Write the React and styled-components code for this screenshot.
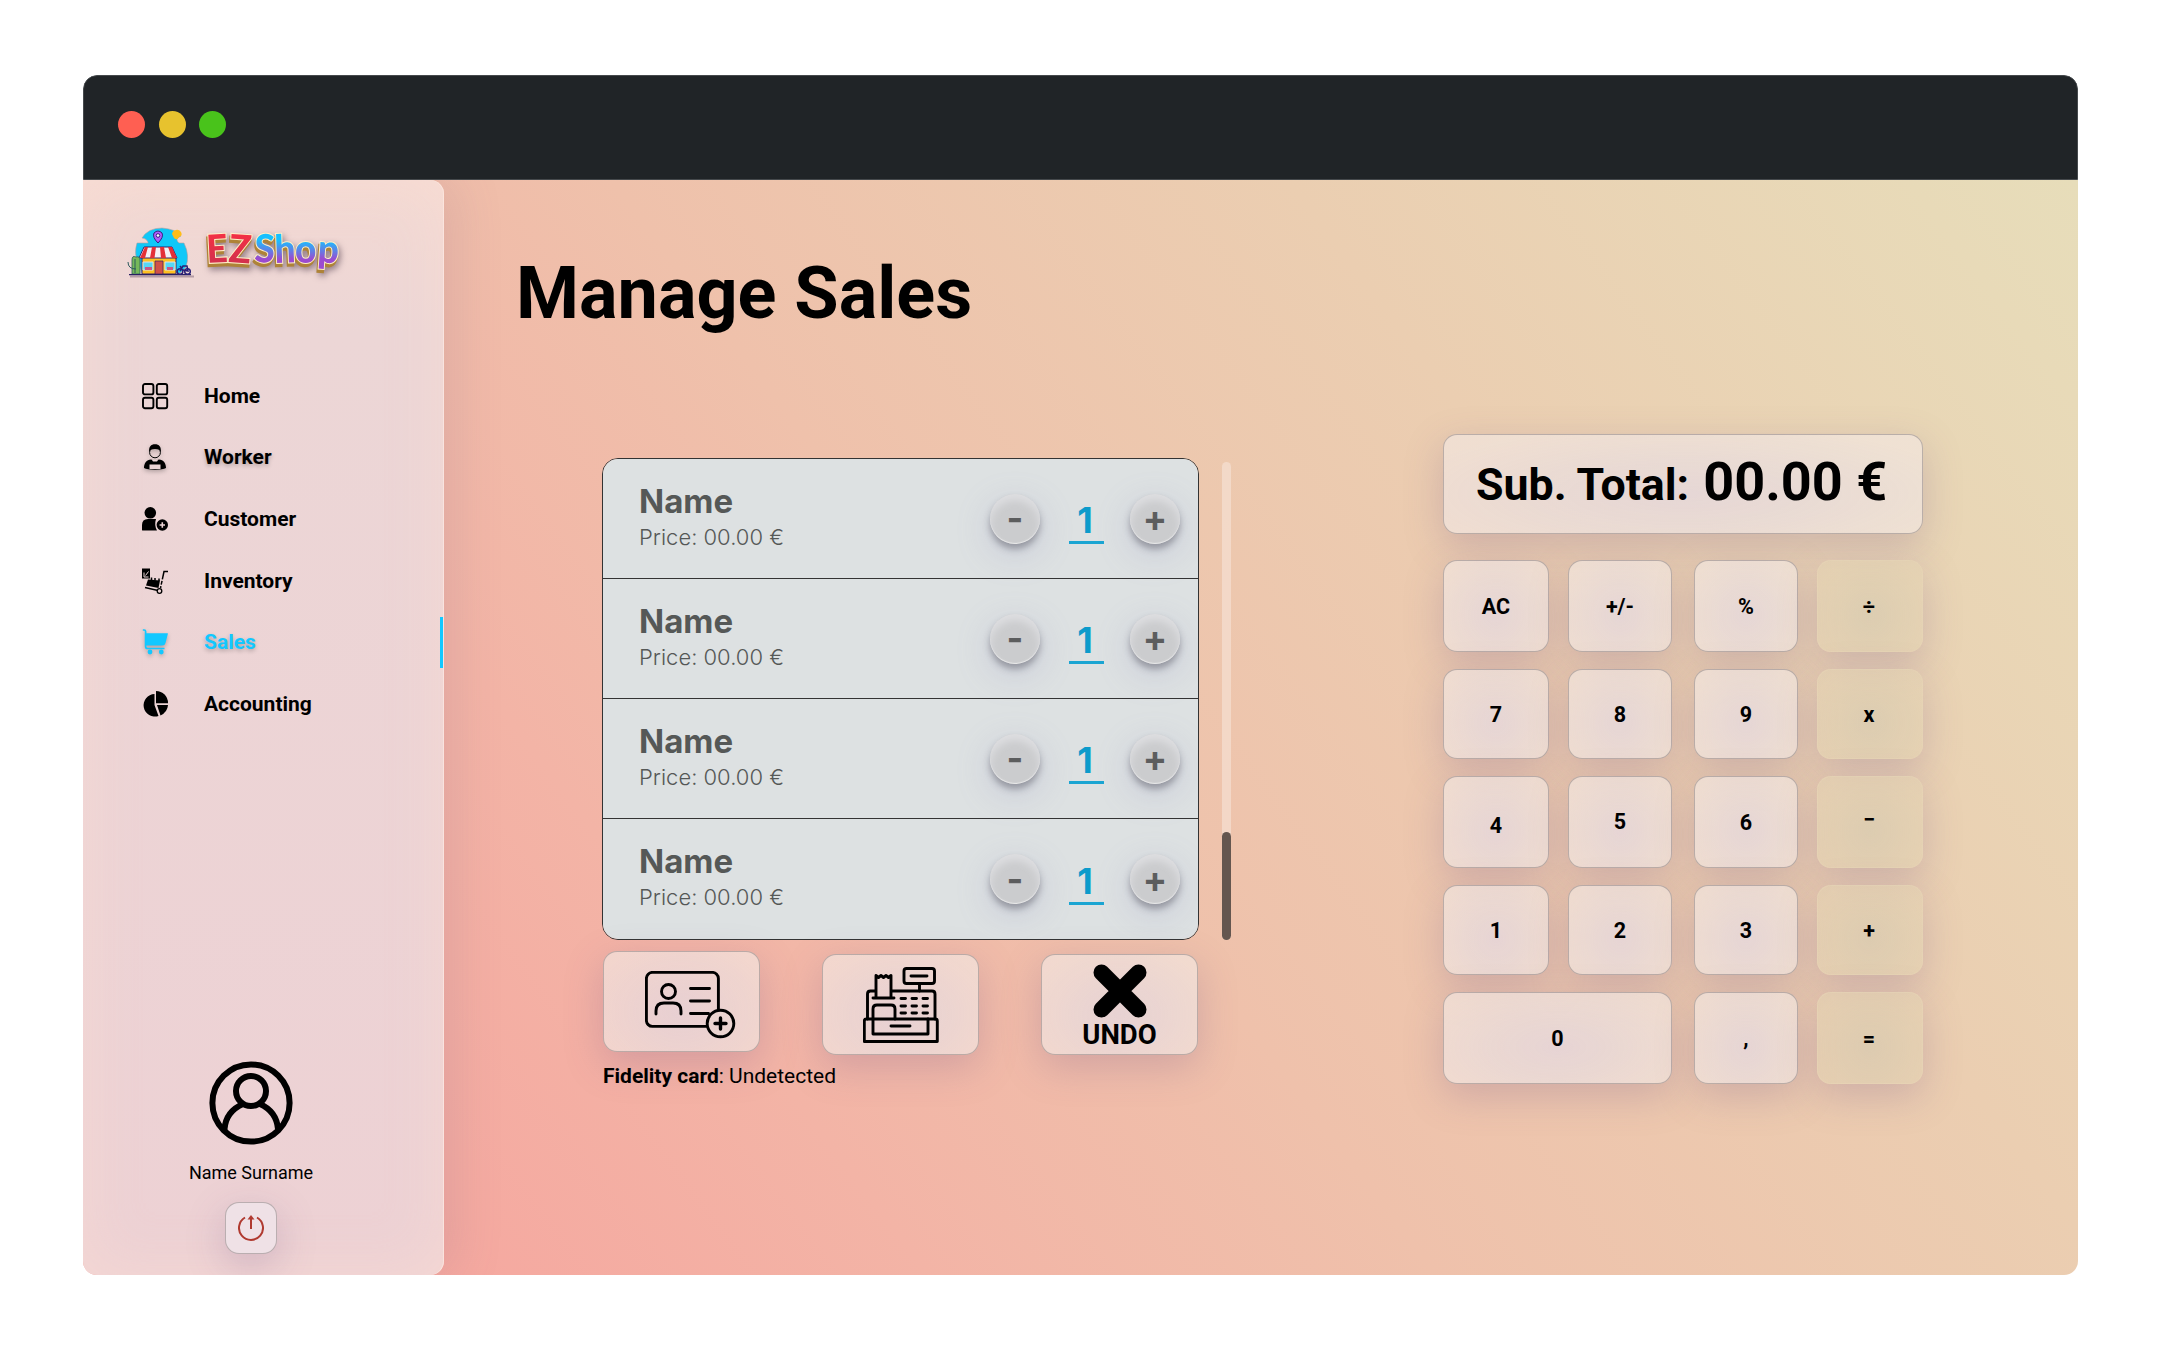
import React from "react";
import styled, { createGlobalStyle } from "styled-components";

const Global = createGlobalStyle`
  *{box-sizing:border-box}
  body{margin:0;background:#fff;font-family:Roboto,"Liberation Sans",sans-serif;color:#000}
`;
const Stage = styled.div`
  height: 1350px;
  padding: 75px 83px;
`;
const Window = styled.div`
  width: 1995px;
  height: 1200px;
  border-radius: 14px;
  overflow: hidden;
  display: flex;
  flex-direction: column;
`;
const TitleBar = styled.header`
  height: 105px;
  flex: none;
  background: #202427;
  border: 1px solid #45494c;
  border-radius: 14px 14px 0 0;
  display: flex;
  gap: 13.5px;
  padding: 35px 0 0 34.4px;
`;
const Light = styled.span`
  width: 27px;
  height: 27px;
  border-radius: 50%;
  background: ${(p) => p.$color};
`;
const Body = styled.div`
  flex: 1;
  display: flex;
  overflow: hidden;
  background: linear-gradient(53deg, #f6a59e 8%, #f3b4a6 30%, #efc1ab 48%, #ebceb1 72%, #e8dab8 94%, #e7ddba 100%);
`;
const Sidebar = styled.aside`
  width: 361px;
  border-radius: 0 14px 14px 0;
  background: linear-gradient(180deg, #f3d9d3, #ecd6d6 14%, #edd1d4 100%);
  box-shadow: inset 0 0 60px rgba(255, 225, 210, 0.45), inset -1px 0 0 rgba(255, 240, 235, 0.6), 10px 0 50px rgba(120, 100, 130, 0.16);
  display: flex;
  flex-direction: column;
`;
const Logo = styled.div`
  display: flex;
  height: 60px;
  margin: 43px 0 0 41px;
`;
const Nav = styled.nav`
  margin-top: 82px;
  display: flex;
  flex-direction: column;
`;
const NavItem = styled.a`
  height: 61.6px;
  display: flex;
  align-items: center;
  padding-left: 59px;
  gap: 36px;
  font-size: 21px;
  font-weight: 700;
  color: ${(p) => (p.$active ? "#12c8ff" : "#000")};
  text-shadow: ${(p) => (p.$shadow ? "0 2px 4px rgba(0,0,0,.25)" : "none")};
  svg {
    width: 26px;
    height: 26px;
    overflow: visible;
    filter: ${(p) => (p.$shadow ? "drop-shadow(0 2px 2px rgba(0,0,0,.25))" : "none")};
  }
`;
const ActiveBar = styled.i`
  width: 3px;
  height: 51px;
  margin-left: auto;
  margin-right: 1px;
  background: #12c8ff;
`;
const Profile = styled.div`
  margin-top: auto;
  width: 336px;
  display: flex;
  flex-direction: column;
  align-items: center;
  font-size: 18px;
  line-height: 22px;
`;
const UserName = styled.div`
  margin-top: 17px;
`;
const glass = `
  border: 1px solid rgba(150,140,140,.6);
  border-radius: 14px;
  background: radial-gradient(ellipse at 50% 60%, rgba(228,216,224,.76), rgba(233,222,224,.72) 40%, rgba(242,231,226,.66) 85%);
  box-shadow: 0 12px 38px rgba(120,90,140,.26);
`;
const Power = styled.button`
  ${glass}
  width: 52px;
  height: 52px;
  padding: 12px;
  margin: 18px 0 21px;
  background: #efe1e6;
`;
const Main = styled.main`
  flex: 1;
  display: flex;
  flex-direction: column;
  padding-left: 72px;
`;
const Title = styled.h1`
  margin: 71px 0 0;
  font-size: 72px;
  line-height: 86px;
  font-weight: 700;
`;
const Columns = styled.div`
  display: flex;
  padding-left: 86px;
`;
const Left = styled.section`
  width: 597px;
  margin-top: 121px;
`;
const List = styled.ul`
  list-style: none;
  margin: 0;
  padding: 0;
  border: 1px solid #333;
  border-radius: 16px;
  overflow: hidden;
  height: 482px;
`;
const Row = styled.li`
  height: 120px;
  border-bottom: 1px solid #333;
  &:last-child { border-bottom: 0; }
  background: #dde1e2;
  display: flex;
  align-items: center;
  padding: 0 17px 0 36px;
  font-family: Inter, sans-serif;
  color: #555857;
`;
const Info = styled.div`
  width: 351px;
  padding-bottom: 5px;
`;
const Name = styled.div`
  font-size: 33px;
  line-height: 41px;
  font-weight: 700;
`;
const Price = styled.div`
  font-size: 22px;
  line-height: 30px;
  font-weight: 300;
`;
const Round = styled.button`
  width: 50px;
  height: 50px;
  border: 0;
  padding: 0;
  border-radius: 50%;
  background: #cbccce;
  font: 700 36px/49px Inter, sans-serif;
  color: #5c5d5e;
  box-shadow: inset 0 6px 8px rgba(235,235,238,.6), inset 0 -1px 1px rgba(240,240,240,.8), 0 5px 7px rgba(60,60,70,.4), 0 10px 34px rgba(140,140,190,.28);
`;
const Qty = styled.span`
  width: 35px;
  height: 43px;
  margin: 8px 26px 0 29px;
  border-bottom: 3px solid #1ba5d2;
  text-align: center;
  font-size: 36px;
  line-height: 38px;
  font-weight: 700;
  color: #0c9bcb;
  text-indent: -3px;
`;
const Actions = styled.div`
  display: flex;
  justify-content: space-between;
  align-items: flex-start;
  margin: 11px 1px 0;
`;
const Action = styled.button`
  ${glass}
  width: 157px;
  height: 101px;
  margin-top: ${(p) => p.$drop || 0}px;
  padding: ${(p) => p.$top || 0}px 0 0 ${(p) => p.$left || 0}px;
  font: 700 27.5px/30px Roboto, sans-serif;
  color: #000;
  display: flex;
  flex-direction: column;
  align-items: center;
  justify-content: center;
  gap: 2px;
  svg { flex: none; }
`;
const Fidelity = styled.p`
  margin: 7px 0 0 1px;
  font-size: 21px;
  line-height: 28px;
  b { font-weight: 700; }
`;
const Track = styled.div`
  width: 9px;
  height: 478px;
  margin: 125px 0 0 23px;
  border-radius: 5px;
  background: rgba(246,226,214,.65);
  display: flex;
  align-items: flex-end;
`;
const Thumb = styled.div`
  width: 9px;
  height: 108px;
  border-radius: 5px;
  background: #64564f;
`;
const Calc = styled.section`
  width: 480px;
  margin: 97px 0 0 212px;
`;
const Display = styled.div`
  ${glass}
  height: 100px;
  padding-left: 32px;
  display: flex;
  align-items: baseline;
  gap: 14px;
  font-weight: 700;
  font-size: 44.7px;
  line-height: 94px;
  white-space: nowrap;
`;
const Amount = styled.span`
  font-size: 54px;
`;
const Keys = styled.div`
  margin-top: 26px;
  display: grid;
  grid-template-columns: 106px 104px 107px 106px;
  grid-template-rows: 92px 90px 92px 90px 92px;
  column-gap: 19px;
  row-gap: 17px;
`;
const Key = styled.button`
  ${glass}
  grid-column: span ${(p) => p.$span || 1};
  margin-left: ${(p) => p.$inset || 0}px;
  padding: ${(p) => (p.$down === undefined ? 1 : p.$down)}px 0 ${(p) => p.$up || 0}px;
  font: 700 21.5px/26px Roboto, sans-serif;
  color: #000;
  ${(p) => p.$op && "padding-right: 2px; background: radial-gradient(ellipse at 50% 60%, rgba(214,202,176,.7), rgba(226,209,178,.6) 80%); border-color: rgba(232,214,184,.5);"}
`;

const icons = {
  Home: (
    <svg viewBox="0 0 26 26" fill="none" stroke="#000" strokeWidth="1.9">
      {[[1, 1], [14.8, 1], [1, 14.8], [14.8, 14.8]].map(([x, y]) => (
        <rect key={x + "-" + y} x={x} y={y} width="10.4" height="10.4" rx="2" />
      ))}
    </svg>
  ),
  Worker: (
    <svg viewBox="0 0 26 26">
      <circle cx="13" cy="8.4" r="5.4" fill="none" stroke="#000" strokeWidth="1" />
      <path d="M7.2 8C6.5 2.8 9 .2 13 .2s6.5 2.6 5.8 7.8C18 6 16.5 5 13 5S8 6 7.2 8Z" />
      <path d="M2 24c0-5 2.500-8 7-8.500L13 17l4-1.500c4.500.5 7 3.500 7 8.500q-3 1.700-11 1.700T2 24Z" />
      <path d="M7.500 20.500h11V25h-11ZM10 16h6l-1 1.500h-4Z" fill="#edd5d6" />
    </svg>
  ),
  Customer: (
    <svg viewBox="0 0 26 26">
      <circle cx="8.300" cy="6.800" r="5.800" />
      <path d="M0 24v-5q0-6 6-6h8q-2 6 1 11.500H1Q0 24.500 0 24Z" />
      <circle cx="20.300" cy="19" r="5.700" />
      <path d="M20.300 16.300v5.400M17.600 19H23" stroke="#edd5d6" strokeWidth="1.600" />
    </svg>
  ),
  Inventory: (
    <svg viewBox="0 0 26 26">
      <path d="M0 .5h8v10H0Z" />
      <path d="M2 4.500v4.500h4.500M3.500 7.500l3-4" stroke="#edd5d6" strokeWidth="1" fill="none" />
      <path d="m6 11.500 12 1-1.500 7.500L4 17.500Z" />
      <path d="M9.500 9.500v2.500M13 10v2.500M17 10.500V13" stroke="#000" strokeWidth="1.500" />
      <path d="M26 3.500h-4L18.500 20" fill="none" stroke="#000" strokeWidth="1.500" strokeDasharray="12 1.500 4 1.500" />
      <path d="m3 19.500 13 3" stroke="#000" strokeWidth="1.500" />
      <circle cx="17.500" cy="23" r="2.300" fill="none" stroke="#000" strokeWidth="1.300" />
    </svg>
  ),
  Sales: (
    <svg viewBox="0 0 26 26" fill="#12c8ff">
      <path d="M4 4.200h21.500q.5 0 .4.600L23.500 14q-.6 2.500-3.200 2.500H4Z" />
      <path d="M.8 1h1.400q1.400 0 1.400 1.500v15q0 2 2 2H22.500" fill="none" stroke="#12c8ff" strokeWidth="1.700" />
      <circle cx="8" cy="23" r="2.400" /><circle cx="19.300" cy="23" r="2.400" />
    </svg>
  ),
  Accounting: (
    <svg viewBox="0 0 26 26">
      <path d="M12.500 3v11l4 11A11.300 11.300 0 1 1 12.500 3Z" />
      <path d="M14 0a12 12 0 0 1 12 12.300H14Z" />
      <path d="M15 14h11q-.5 7-7.500 10.500Z" />
    </svg>
  ),
};

const LogoSvg = styled.svg`
  flex: none;
  overflow: visible;
`;
const WordMark = styled.g`
  font: 900 39px Lato, sans-serif;
  filter: drop-shadow(2px 3px 3px rgba(60, 40, 60, 0.5));
`;
const letters = [
  ["E", 83, 40, -3, "red"],
  ["Z", 104, 39, 4, "red"],
  ["S", 130, 39, 2, "blue"],
  ["h", 151, 40, -2, "blue"],
  ["o", 171, 40, 0, "blue"],
  ["p", 193, 39, 4, "blue"],
];
const letterNodes = (dx, dy, extra) =>
  letters.map(([ch, x, y, r, fill]) => (
    <text key={ch} transform={`translate(${x + dx} ${y + dy}) rotate(${r}) scale(.95 1)`} fill={`url(#${fill})`} {...extra}>{ch}</text>
  ));

const Shop = () => (
  <LogoSvg width="220" height="66" viewBox="0 0 220 66">
    <defs>
      <linearGradient id="red" x1="0" y1="0" x2="0" y2="1"><stop offset="0" stopColor="#ff3040" /><stop offset="1" stopColor="#c93050" /></linearGradient>
      <linearGradient id="blue" x1="0" y1="0" x2="0" y2="1"><stop offset=".35" stopColor="#18c0ff" /><stop offset=".75" stopColor="#9b4bd0" /></linearGradient>
    </defs>
    <g transform="translate(4 2)">
      <path d="M20 17Q18 13 14 13Q20 3 34 3Q48 4 53 11Q46 14 51 18H56Q62 30 58 42L52 48H14L12 42Q5 30 9 18H20Z" fill="#10c8f8" stroke="#b49fa0" strokeWidth=".6" />
      <path d="M44 9a5 5 0 0 1 9-2q2 4-2 5-2 4-5 1Z" fill="#ffbd18" />
      <path d="M30 18q-6-6-4-10 4-4 8 0 2 4-4 10Z" fill="#b15dfa" stroke="#352080" />
      <circle cx="30" cy="10.500" r="1.800" fill="#fff" stroke="#352080" />
      <path d="M14 32h34v17H14Z" fill="#ffc120" stroke="#35206a" />
      <path d="M16 22h28l5 11H11Z" fill="#f4f0f4" stroke="#35206a" />
      <path d="M17 22h3l-3 11h-5ZM24 22h4l-1.500 11H22ZM32 22h4l2 11h-5ZM40 22h4l5 11h-5Z" fill="#e33038" />
      <path d="M27 36h8v13h-8Z" fill="#d15147" stroke="#35206a" strokeWidth=".7" />
      <path d="M15 37h10v8H15ZM37 37h10v8H37Z" fill="#57d8f6" stroke="#dfe2e7" />
      <path d="M17 42h7v3h-7ZM39 42h6v3h-6Z" fill="#c85787" />
      <path d="M4 49V35q0-5 4-3 4-1 4 3v14Z" fill="#76b85a" stroke="#2d5a5d" strokeWidth=".8" />
      <path d="M0 37q0 7 8 7M7 34v14" stroke="#2d5a5d" fill="none" />
      <path d="M2 51.500h64" stroke="#9c8491" strokeWidth="2" opacity=".7" />
      <path d="M1 49.700h62" stroke="#292061" strokeWidth="1.200" />
      <g fill="none" stroke="#292078" strokeWidth="1.500"><circle cx="52" cy="46.500" r="2.800" /><circle cx="59.500" cy="46.500" r="2.800" /><path d="m52 46 3-5h4l1 5-5-1-3-4" /></g>
    </g>
    <WordMark>
      {letterNodes(-1, 3, { fill: "#ae8338", stroke: "#ae8338", strokeWidth: 2.5, "aria-hidden": true })}
      {letterNodes(0, 0, { stroke: "#fff0c8", strokeWidth: 2, paintOrder: "stroke" })}
    </WordMark>
  </LogoSvg>
);

const Avatar = () => (
  <svg width="84" height="84" viewBox="0 0 84 84" fill="none" stroke="#000" strokeWidth="6">
    <circle cx="42" cy="42" r="38.600" /><circle cx="42" cy="30" r="15" />
    <path d="M15.500 69v-1c1-12 7-20 18.500-25M69 69v-1c-1-12-7-20-18-25" />
  </svg>
);
const PowerIcon = () => (
  <svg width="26" height="26" viewBox="0 0 26 26" fill="none" stroke="#b03a30" strokeWidth="2">
    <path d="M7 2.500a12 12 0 1 0 12 0" /><path d="M13 14V3" /><path d="m9.500 4.500 3.500-4.500 3.500 4.500Z" fill="#b03a30" stroke="none" />
  </svg>
);
const CardIcon = () => (
  <svg width="91" height="68" viewBox="0 0 91 68" fill="none" stroke="#000" strokeWidth="2.900" strokeLinecap="round">
    <rect x="1.400" y="1.400" width="72" height="54" rx="6" />
    <circle cx="23.500" cy="20.500" r="7" /><path d="M11 43v-3q0-8 8-8h9q8 0 8 8v3M45.500 17.500h19M45.500 30h19M45.500 42.500h18" />
    <circle cx="75.500" cy="52.500" r="13.300" fill="#ebd4d0" /><path d="M75.500 47v11M70 52.500h11" strokeWidth="3.400" />
  </svg>
);
const RegisterIcon = () => (
  <svg width="76" height="76" viewBox="0 0 76 76" fill="none" stroke="#000" strokeWidth="2.900" strokeLinejoin="round">
    <path d="M1.300 54q0-2 2-2h69q2 0 2 2v20.500h-73Z" /><path d="M10 52v15h55V52M28 59h19M4.500 52V27q0-3 3-3h5M29 24h40q3 0 3 3v25" strokeLinecap="round" />
    <path d="M13 31V8.500l2.500 2L18 8.500l2.500 2L23 8.500l2.500 2L28 8.500v22.500M10 31h21M10 52V42q0-4 4-4h14q4 0 4 4v10" strokeLinecap="round" />
    <rect x="41" y="1.500" width="30.500" height="15" rx="2.500" /><path d="M48 9h16M56.500 17v7" strokeLinecap="round" />
    <path d="M38 31.500h4.500M49 31.500h4.500M60 31.500h4.500M38 39h4.500M49 39h4.500M60 39h4.500M38 46h4.500M49 46h4.500M60 46h4.500" strokeLinecap="round" />
  </svg>
);
const Cross = () => (
  <svg width="54" height="54" viewBox="0 0 54 54" stroke="#000" strokeWidth="16" strokeLinecap="round"><path d="m8.500 8.500 37 37M45.500 8.500l-37 37" /></svg>
);

const keys = [
  ["AC"], ["+/-"], ["%", { $inset: 3 }], ["÷", { $op: true }],
  ["7"], ["8"], ["9", { $inset: 3 }], ["x", { $op: true }],
  ["4", { $down: 7 }], ["5", { $up: 2 }], ["6", { $inset: 3 }], ["−", { $op: true, $up: 6 }],
  ["1"], ["2"], ["3", { $inset: 3 }], ["+", { $op: true }],
  ["0", { $span: 2 }], [",", { $inset: 3 }], ["=", { $op: true }],
];

export default function App() {
  return (
    <Stage>
      <Global />
      <Window>
        <TitleBar>
          <Light $color="#ff5f52" /><Light $color="#e7c22e" /><Light $color="#49c31b" />
        </TitleBar>
        <Body>
          <Sidebar>
            <Logo><Shop /></Logo>
            <Nav>
              {Object.keys(icons).map((label) => (
                <NavItem key={label} $active={label === "Sales"} $shadow={label === "Sales" || label === "Worker"}>
                  {icons[label]}
                  <span>{label}</span>
                  {label === "Sales" && <ActiveBar />}
                </NavItem>
              ))}
            </Nav>
            <Profile>
              <Avatar />
              <UserName>Name Surname</UserName>
              <Power><PowerIcon /></Power>
            </Profile>
          </Sidebar>
          <Main>
            <Title>Manage Sales</Title>
            <Columns>
              <Left>
                <List>
                  {[0, 1, 2, 3].map((i) => (
                    <Row key={i}>
                      <Info><Name>Name</Name><Price>Price: 00.00 €</Price></Info>
                      <Round>-</Round><Qty>1</Qty><Round>+</Round>
                    </Row>
                  ))}
                </List>
                <Actions>
                  <Action $left={17} $top={7}><CardIcon /></Action>
                  <Action $drop={3} $left={1}><RegisterIcon /></Action>
                  <Action $drop={3} $top={4}><Cross />UNDO</Action>
                </Actions>
                <Fidelity><b>Fidelity card</b>: Undetected</Fidelity>
              </Left>
              <Track><Thumb /></Track>
              <Calc>
                <Display><span>Sub. Total:</span><Amount>00.00 €</Amount></Display>
                <Keys>
                  {keys.map(([label, opts]) => <Key key={label} {...opts}>{label}</Key>)}
                </Keys>
              </Calc>
            </Columns>
          </Main>
        </Body>
      </Window>
    </Stage>
  );
}
